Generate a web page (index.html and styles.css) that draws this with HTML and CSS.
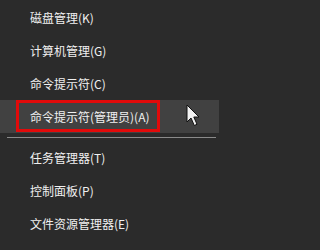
FILE: index.html
```html
<!DOCTYPE html>
<html lang="zh-CN">
<head>
<meta charset="utf-8">
<link rel="stylesheet" href="styles.css">
</head>
<body>
<div class="menu">
  <div class="item">磁盘管理(K)</div>
  <div class="item">计算机管理(G)</div>
  <div class="item">命令提示符(C)</div>
  <div class="item active">
    <span class="box">命令提示符(管理员)(A)</span>
    <svg class="cursor" width="14" height="23" viewBox="0 0 14 23">
      <path d="M1 1 L1 18 L5 14 L8.3 21.5 L11 20.3 L7.8 13 L13 13 Z" fill="#f2f2f2" stroke="#111" stroke-width="1" stroke-linejoin="miter"/>
    </svg>
  </div>
  <div class="sep"></div>
  <div class="item">任务管理器(T)</div>
  <div class="item">控制面板(P)</div>
  <div class="item">文件资源管理器(E)</div>
</div>
</body>
</html>
```
FILE: styles.css
```css
html, body {
  margin: 0;
  padding: 0;
  background: #2b2b2b;
}
.menu {
  width: 219px;
  height: 250px;
  padding-top: 1px;
  box-sizing: border-box;
  background: #2b2b2b;
  font-family: "Noto Sans CJK SC", "Microsoft YaHei", sans-serif;
  font-size: 12px;
  color: #f0f0f0;
}
.item {
  height: 33px;
  padding-left: 30px;
  display: flex;
  align-items: center;
  white-space: nowrap;
}
.item.active {
  position: relative;
  background: #414141;
  padding-left: 16px;
  align-items: flex-start;
}
.box {
  box-sizing: border-box;
  width: 144px;
  height: 32px;
  border: 3px solid #e20a0a;
  padding-left: 11px;
  display: flex;
  align-items: center;
}
.cursor {
  position: absolute;
  left: 186px;
  top: 4px;
}
.sep {
  height: 1px;
  background: #8a8a8a;
  margin: 4px 3px 3px 7px;
}
```
